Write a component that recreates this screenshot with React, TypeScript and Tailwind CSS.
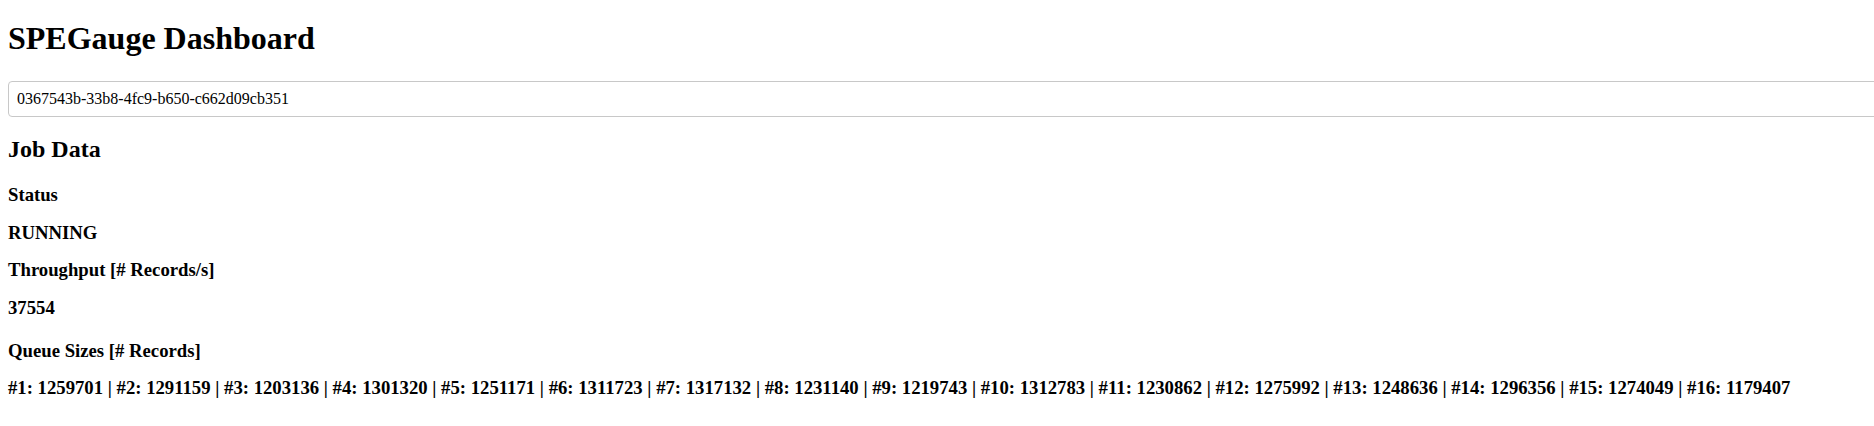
import { useState } from 'react'

interface JobData {
  status: string;
  throughput: number;
  queueSizes: number[];
}

const job: JobData = {
  status: 'RUNNING',
  throughput: 37554,
  queueSizes: [
    1259701, 1291159, 1203136, 1301320, 1251171, 1311723, 1317132, 1231140,
    1219743, 1312783, 1230862, 1275992, 1248636, 1296356, 1274049, 1179407,
  ],
}

export default function App() {
  const [jobId, setJobId] = useState('0367543b-33b8-4fc9-b650-c662d09cb351')

  const queueText = job.queueSizes.map((size, i) => `#${i + 1}: ${size}`).join(' | ')

  return (
    <div className="min-h-screen w-full overflow-hidden bg-white text-black font-['Liberation_Serif','Times_New_Roman',serif]">
      <div className="px-2 pt-5">
        <h1 className="text-[32px] leading-[37px] font-bold">SPEGauge Dashboard</h1>

        <input
          type="text"
          value={jobId}
          onChange={(e) => setJobId(e.target.value)}
          className="mt-6 block w-[1876px] h-9 px-2 text-base border border-[#c8c8c8] rounded-[4px] bg-white text-black outline-none font-['Liberation_Serif','Times_New_Roman',serif]"
        />

        <h2 className="mt-[18px] text-2xl leading-[28px] font-bold">Job Data</h2>

        {/* Status */}
        <h3 className="mt-[21px] text-[18.72px] leading-[22px] font-bold">Status</h3>
        <h3 className="mt-[15.5px] text-[18.72px] leading-[22px] font-bold">{job.status}</h3>

        {/* Throughput */}
        <h3 className="mt-[15.5px] text-[18.72px] leading-[22px] font-bold">Throughput [# Records/s]</h3>
        <h3 className="mt-[15.5px] text-[18.72px] leading-[22px] font-bold">{job.throughput}</h3>

        {/* Queues */}
        <h3 className="mt-[21px] text-[18.72px] leading-[22px] font-bold">Queue Sizes [# Records]</h3>
        <h3 className="mt-[15px] text-[18.72px] leading-[22px] font-bold whitespace-nowrap">{queueText}</h3>
      </div>
    </div>
  )
}
